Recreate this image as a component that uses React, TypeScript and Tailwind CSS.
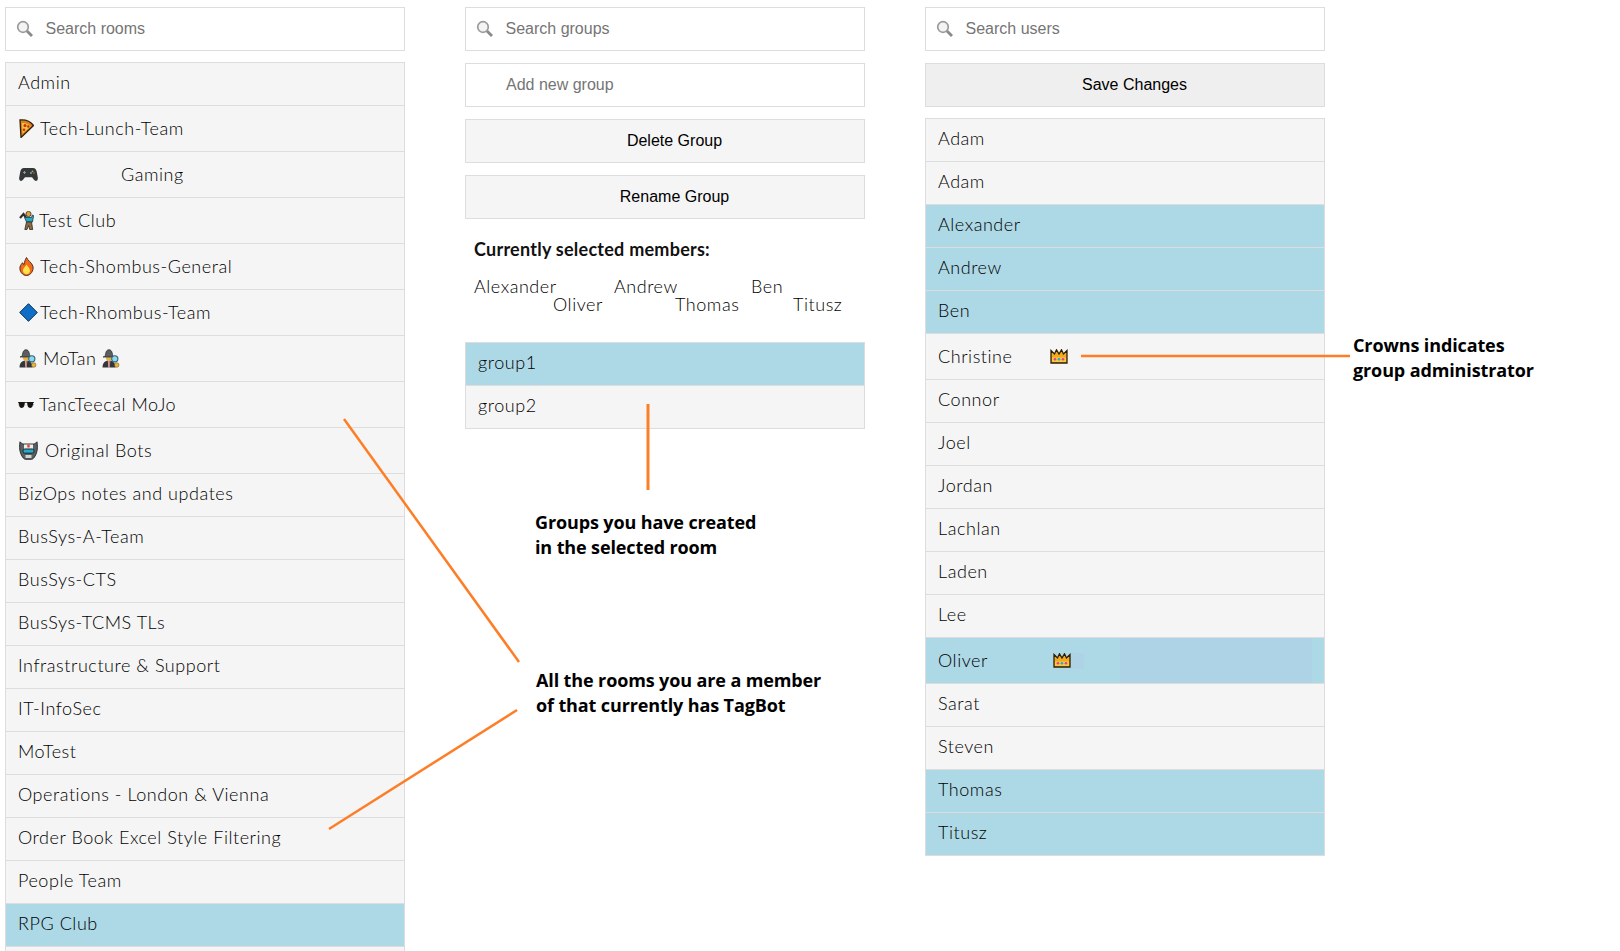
const rooms = [
  "BizOps notes and updates",
  "BusSys-A-Team",
  "BusSys-CTS",
  "BusSys-TCMS TLs",
  "Infrastructure & Support",
  "IT-InfoSec",
  "MoTest",
  "Operations - London & Vienna",
  "Order Book Excel Style Filtering",
  "People Team",
];

const usersTop = [
  { name: "Adam", active: false },
  { name: "Adam", active: false },
  { name: "Alexander", active: true },
  { name: "Andrew", active: true },
  { name: "Ben", active: true },
];

const usersMiddle = ["Connor", "Joel", "Jordan", "Lachlan", "Laden", "Lee"];

const usersBottom = [
  { name: "Sarat", active: false },
  { name: "Steven", active: false },
  { name: "Thomas", active: true },
  { name: "Titusz", active: true },
];

function SearchIcon() {
  return (
    <svg width="18" height="18" viewBox="0 0 18 18" className="shrink-0" fill="none">
      <circle cx="7" cy="7" r="5.3" stroke="#9a9a9a" strokeWidth="1.7" fill="#f4f4f4" />
      <path d="M11 11l5 5" stroke="#8a8a8a" strokeWidth="2.8" />
    </svg>
  );
}

function Pizza() {
  return (
    <svg width="15" height="19" viewBox="0 0 15 19" className="shrink-0">
      <path d="M1 1C6.500.5 11.500 2.500 14.500 6.500L2 18.500z" fill="#d9821c" stroke="#33220c" strokeWidth="1.300" />
      <path d="M3 4C6.500 3.700 9.500 5 11.800 7.300L3.500 14.500z" fill="#f7c53a" />
      <circle cx="6" cy="6.500" r="1.500" fill="#c92a1e" />
      <circle cx="9.300" cy="7.500" r="1.200" fill="#c92a1e" />
      <circle cx="5" cy="10.800" r="1.300" fill="#c92a1e" />
    </svg>
  );
}

function Gamepad() {
  return (
    <svg width="19" height="15" viewBox="0 0 19 15" className="shrink-0">
      <path d="M5 1h9c2.200 0 3.200 1.500 3.800 4l1 5.500c.4 2-.6 3.500-1.900 3.500-1.400 0-2.500-2.200-3.900-3.700H6c-1.400 1.500-2.500 3.700-3.900 3.700C.8 14-.2 12.500.2 10.500l1-5.500C1.800 2.500 2.800 1 5 1z" fill="#34383b" />
      <path d="M4 5.500h3M5.500 4v3" stroke="#8f9598" strokeWidth="1" />
      <circle cx="13.500" cy="4.300" r=".9" fill="#7ec251" />
      <circle cx="12" cy="6" r=".8" fill="#d9d9d9" />
      <circle cx="15" cy="6" r=".8" fill="#d9534f" />
    </svg>
  );
}

function Golfer() {
  return (
    <svg width="15" height="19" viewBox="0 0 15 19" className="shrink-0">
      <path d="M1 7l3.500-4L7 6.500" stroke="#2e2e2e" strokeWidth="2.200" fill="none" />
      <circle cx="9.500" cy="3" r="2.600" fill="#d9a441" stroke="#3a2a10" strokeWidth=".8" />
      <path d="M5.500 6.500h7l.8-2.500 1.300.5-1.100 6.500H7.500z" fill="#27a9c9" stroke="#1d3a44" strokeWidth=".8" />
      <path d="M7.500 11h5l1.200 7.500h-3l-1-4-1.700 4H5.800z" fill="#8a6b4a" stroke="#33261a" strokeWidth=".8" />
    </svg>
  );
}

function Fire() {
  return (
    <svg width="15" height="19" viewBox="0 0 15 19" className="shrink-0">
      <path d="M7.500.5c1 3 5.500 5 6.500 9 .8 4-2.300 9-6.500 9S.2 14 1 10c.4-2 1.700-3 2.500-4.300.5 1 .9 1.600 1.500 2C5.500 5 6 3 7.500.5z" fill="#f26a1b" stroke="#4a230c" strokeWidth=".9" />
      <path d="M7.500 7.500c.6 1.500 4 3.800 3.500 6.700-.4 1.900-2 3-3.500 3s-3.100-1.100-3.500-3C3.500 11.500 6.800 9.500 7.500 7.500z" fill="#fde24a" />
    </svg>
  );
}

function Diamond() {
  return (
    <svg width="19" height="19" viewBox="0 0 19 19" className="shrink-0">
      <path d="M9.500.7l8.800 8.800-8.800 8.800L.7 9.500z" fill="#0f6fc6" stroke="#0b2f52" strokeWidth="1" />
    </svg>
  );
}

function Detective() {
  return (
    <svg width="18" height="19" viewBox="0 0 18 19" className="shrink-0">
      <path d="M.5 18.500c0-4.500 2.500-7 6.500-7s6.500 2.500 6.500 7z" fill="#33373a" />
      <path d="M5.800 11.500h2.500l-.6 7H6.400z" fill="#f0f0f0" />
      <path d="M6.500 12h1.200l-.2 6h-.8z" fill="#c0392b" />
      <circle cx="7" cy="8.300" r="3.300" fill="#e8b23c" />
      <path d="M1 8c1.200-.5 2-.6 2.200-1C3.700 3.500 4.300.8 7 .8S10.300 3.500 10.800 7c.2.400 1 .5 2.200 1z" fill="#5b5f62" stroke="#232527" strokeWidth=".7" />
      <circle cx="12.800" cy="9.800" r="3.100" fill="#8fd6ee" stroke="#27657b" strokeWidth="1.100" />
      <circle cx="14.700" cy="16" r="2.300" fill="#e8b23c" stroke="#6b4d12" strokeWidth=".5" />
    </svg>
  );
}

function Sunglasses() {
  return (
    <svg width="16" height="9" viewBox="0 0 16 9" className="shrink-0">
      <path d="M0 2.500h16" stroke="#5a4a3a" strokeWidth="1" />
      <path d="M.8 2h6c.2 3-1 6-3.100 6S.6 5 .8 2zM9.200 2h6c.2 3-.9 6-3 6S9 5 9.200 2z" fill="#141414" />
      <path d="M7 4.500l.6 1M.6 4l.5 1.500" stroke="#d98a2b" strokeWidth=".6" />
      <path d="M15.500 4l-.5 1.500" stroke="#2f7fd1" strokeWidth=".6" />
    </svg>
  );
}

function Robot() {
  return (
    <svg width="19" height="19" viewBox="0 0 19 19" className="shrink-0">
      <path d="M1 .8C2 2 3 2.800 4.500 3h10C16 2.800 17 2 18 .8c.6 4 .6 8-.5 11-1 3-3 6.500-5 6.500h-6c-2 0-4-3.500-5-6.500C.4 8.800.4 4.800 1 .8z" fill="#5b5f62" stroke="#202325" strokeWidth=".9" />
      <path d="M5 3.500h9v5H5z" fill="#ececec" />
      <path d="M8.300 3.500h2.400v3H8.300z" fill="#d9482f" />
      <rect x="4" y="8" width="11" height="4.200" rx="1.800" fill="#27a9c9" stroke="#16262b" strokeWidth="1" />
      <path d="M6.500 14h6v3h-6z" fill="#d2d2d2" />
    </svg>
  );
}

function Crown() {
  return (
    <svg width="18" height="15" viewBox="0 0 18 15" className="shrink-0">
      <path d="M1 1.500l3.500 3.500L6.500.8 9 5l2.500-4.200L13.500 5 17 1.500V14H1z" fill="#f2ab1f" stroke="#2e2008" strokeWidth="1.300" />
      <path d="M2 8.500h14V13H2z" fill="#f7c93f" />
      <circle cx="5" cy="10.300" r="1.300" fill="#e0409a" />
      <circle cx="9" cy="10.300" r="1.300" fill="#2aa8d8" />
      <circle cx="13" cy="10.300" r="1.300" fill="#e0409a" />
    </svg>
  );
}

function SearchBox({ label }: { label: string }) {
  return (
    <div className="h-[44px] flex items-center border border-[#ddd] bg-white pl-[10px] text-[16px] text-[#757575] font-['Liberation_Sans',sans-serif]">
      <SearchIcon />
      <span className="ml-[11.5px]">{label}</span>
    </div>
  );
}

function ActionButton({ label, dark }: { label: string; dark?: boolean }) {
  return (
    <div
      className={`h-[44px] flex items-center justify-center border border-[#ddd] pl-[19px] text-[16px] text-black font-['Liberation_Sans',sans-serif] ${
        dark ? "bg-[#efefef]" : "bg-[#f5f5f5]"
      }`}
    >
      {label}
    </div>
  );
}

function Row({ children, active, tall }: { children?: React.ReactNode; active?: boolean; tall?: boolean }) {
  return (
    <div
      className={`flex items-center border-b border-[#ddd] px-[12px] text-[18px] font-light text-black tracking-[0.55px] ${
        tall ? "h-[46px]" : "h-[43px] pb-[3px]"
      } ${active ? "bg-[#add8e6]" : "bg-[#f5f5f5]"}`}
    >
      {children}
    </div>
  );
}

function RoomColumn() {
  return (
    <div className="w-[400px] shrink-0">
      <SearchBox label="Search rooms" />
      <div className="mt-[11px] border-x border-t border-[#ddd]">
        <Row>Admin</Row>
        <Row tall>
          <span className="ml-[1px]"><Pizza /></span>
          <span className="ml-[6px]">Tech-Lunch-Team</span>
        </Row>
        <Row tall>
          <span className="ml-[1px]"><Gamepad /></span>
          <span className="ml-[83px]">Gaming</span>
        </Row>
        <Row tall>
          <span className="ml-[1px]"><Golfer /></span>
          <span className="ml-[5px]">Test Club</span>
        </Row>
        <Row tall>
          <span className="ml-[1px]"><Fire /></span>
          <span className="ml-[6px]">Tech-Shombus-General</span>
        </Row>
        <Row tall>
          <span className="ml-[1px]"><Diamond /></span>
          <span className="ml-[2px]">Tech-Rhombus-Team</span>
        </Row>
        <Row tall>
          <span className="ml-[1px]"><Detective /></span>
          <span className="mx-[6px]">MoTan</span>
          <Detective />
        </Row>
        <Row tall>
          <Sunglasses />
          <span className="ml-[5px]">TancTeecal MoJo</span>
        </Row>
        <Row tall>
          <span className="ml-[1px]"><Robot /></span>
          <span className="ml-[7px]">Original Bots</span>
        </Row>
        {rooms.map((room) => (
          <Row key={room}>{room}</Row>
        ))}
        <Row active>RPG Club</Row>
        <Row />
      </div>
    </div>
  );
}

function GroupColumn() {
  return (
    <div className="w-[400px] shrink-0">
      <SearchBox label="Search groups" />
      <div className="mt-[12px] h-[44px] flex items-center border border-[#ddd] bg-white pl-[40px] text-[16px] text-[#757575] font-['Liberation_Sans',sans-serif]">
        Add new group
      </div>
      <div className="mt-[12px]">
        <ActionButton label="Delete Group" />
      </div>
      <div className="mt-[12px]">
        <ActionButton label="Rename Group" />
      </div>
      <div className="mt-[18px] pl-[9px] h-[24px] leading-[24px] text-[18px] font-bold text-[#111] tracking-[0.25px]">
        Currently selected members:
      </div>
      <div className="mt-[16px] pl-[9px] text-[18px] leading-[18px] font-light text-black tracking-[0.55px]">
        <div className="flex">
          <span className="w-[140px]">Alexander</span>
          <span className="w-[137px]">Andrew</span>
          <span>Ben</span>
        </div>
        <div className="flex pl-[79px]">
          <span className="w-[122px]">Oliver</span>
          <span className="w-[118px]">Thomas</span>
          <span>Titusz</span>
        </div>
      </div>
      <div className="mt-[29px] border-x border-t border-[#ddd]">
        <Row active>group1</Row>
        <Row>group2</Row>
      </div>
    </div>
  );
}

function UserColumn() {
  return (
    <div className="w-[400px] shrink-0">
      <SearchBox label="Search users" />
      <div className="mt-[12px]">
        <ActionButton label="Save Changes" dark />
      </div>
      <div className="mt-[11px] border-x border-t border-[#ddd]">
        {usersTop.map((user, i) => (
          <Row key={i} active={user.active}>
            {user.name}
          </Row>
        ))}
        <Row tall>
          <span className="w-[112px]">Christine</span>
          <Crown />
        </Row>
        {usersMiddle.map((name) => (
          <Row key={name}>{name}</Row>
        ))}
        <Row tall active>
          <span className="w-[116px]">Oliver</span>
          <Crown />
          <span className="w-[13px] h-[16px] bg-[#aed2e6]" />
          <span className="ml-[36px] w-[193px] h-full bg-[#aed2e6]" />
        </Row>
        {usersBottom.map((user) => (
          <Row key={user.name} active={user.active}>
            {user.name}
          </Row>
        ))}
      </div>
    </div>
  );
}

function Note({ className, lines }: { className: string; lines: string[] }) {
  return (
    <div className={`absolute text-[18px] leading-[25px] font-bold text-black tracking-[-0.12px] font-['Open_Sans',sans-serif] ${className}`}>
      {lines.map((line) => (
        <div key={line}>{line}</div>
      ))}
    </div>
  );
}

export default function App() {
  return (
    <div className="relative w-[1620px] h-[951px] overflow-hidden bg-white font-['Lato',sans-serif]">
      <div className="flex gap-[60px] pl-[5px] pt-[7px]">
        <RoomColumn />
        <GroupColumn />
        <UserColumn />
      </div>

      <svg className="absolute inset-0 pointer-events-none" width="1620" height="951">
        <g stroke="#fd7e27" fill="none">
          <path d="M344 419L519 662" strokeWidth="2.500" />
          <path d="M329 829L517 710" strokeWidth="2.500" />
          <path d="M648 404V490" strokeWidth="3" />
          <path d="M1081 356H1350" strokeWidth="2.500" />
        </g>
      </svg>

      <Note className="left-[535px] top-[510px]" lines={["Groups you have created", "in the selected room"]} />
      <Note className="left-[536px] top-[668px]" lines={["All the rooms you are a member", "of that currently has TagBot"]} />
      <Note className="left-[1353px] top-[333px]" lines={["Crowns indicates", "group administrator"]} />
    </div>
  );
}
